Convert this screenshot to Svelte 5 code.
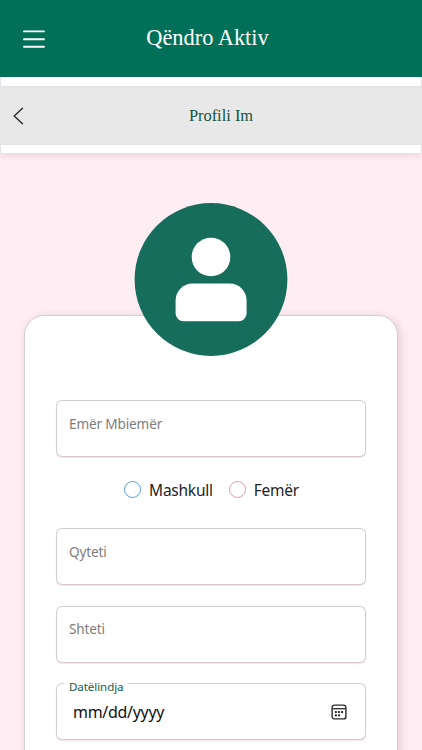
<script lang="ts">
  let name = $state('');
  let gender = $state('');
  let city = $state('');
  let country = $state('');
  let birthday = $state('');

  const genders = [
    { value: 'male', label: 'Mashkull' },
    { value: 'female', label: 'Femër' },
  ];
</script>

<div class="page">
  <header class="topbar">
    <button class="menu" aria-label="Menu">
      <svg width="22" height="20" viewBox="0 0 22 20" aria-hidden="true">
        <path d="M1 2.4H21M1 10.2H21M1 17.8H21" stroke="#fff" stroke-width="1.9" stroke-linecap="round" />
      </svg>
    </button>
    <h1>Qëndro Aktiv</h1>
  </header>

  <div class="subbar-wrap">
    <nav class="subbar">
      <button class="back" aria-label="Back">
        <svg width="12" height="18" viewBox="0 0 12 18" fill="none" aria-hidden="true">
          <path d="M9.5 1.3L1.2 9L9.5 16.7" stroke="#26292c" stroke-width="1.4" stroke-linecap="round" stroke-linejoin="round" />
        </svg>
      </button>
      <h2>Profili Im</h2>
    </nav>
  </div>

  <main>
    <div class="card">
      <svg class="avatar" width="154" height="154" viewBox="0 0 154 154" aria-hidden="true">
        <circle cx="77" cy="77.5" r="76.4" fill="#176d5c" />
        <circle cx="77" cy="55" r="19.3" fill="#fff" />
        <path
          d="M58.6 81.5H95.6A17 17 0 0 1 112.6 98.5V111.3A8 8 0 0 1 104.6 119.3H49.6A8 8 0 0 1 41.6 111.3V98.5A17 17 0 0 1 58.6 81.5Z"
          fill="#fff"
        />
      </svg>

      <form>
        <input class="field" placeholder="Emër Mbiemër" aria-label="Emër Mbiemër" bind:value={name} />

        <div class="genders">
          {#each genders as g}
            <label class={g.value}>
              <input type="radio" name="gender" value={g.value} bind:group={gender} />
              <span>{g.label}</span>
            </label>
          {/each}
        </div>

        <input class="field" placeholder="Qyteti" aria-label="Qyteti" bind:value={city} />
        <input class="field" placeholder="Shteti" aria-label="Shteti" bind:value={country} />

        <div class="field date">
          <label for="birthday">Datëlindja</label>
          <input id="birthday" placeholder="mm/dd/yyyy" bind:value={birthday} />
          <svg width="16" height="16" viewBox="0 0 16 16" fill="none" aria-hidden="true">
            <rect x="1.1" y="1.1" width="13.8" height="13.8" rx="2.5" stroke="#2b2b2b" stroke-width="1.4" />
            <path d="M1.2 4.7H14.8" stroke="#2b2b2b" stroke-width="1.3" />
            <g fill="#111">
              <circle cx="4.9" cy="8.1" r="1.1" />
              <circle cx="8" cy="8.1" r="1.1" />
              <circle cx="11.1" cy="8.1" r="1.1" />
              <circle cx="4.9" cy="11.3" r="1.1" />
              <circle cx="8" cy="11.3" r="1.1" />
            </g>
          </svg>
        </div>
      </form>
    </div>
  </main>
</div>

<style>
  .page {
    height: 100vh;
    overflow: hidden;
    background: #feedf3;
    color: #212529;
    font-family: 'Segoe UI', 'Noto Sans', sans-serif;
  }

  button {
    display: flex;
    padding: 0;
    border: 0;
    background: none;
    cursor: pointer;
  }

  h1,
  h2 {
    margin: 0;
    font-family: 'Liberation Serif', serif;
    font-weight: 400;
    text-align: center;
  }

  .topbar {
    display: grid;
    grid-template-columns: 46px 1fr 46px;
    align-items: center;
    height: 77px;
    background: #007158;
  }

  .menu {
    margin-left: 22.5px;
    padding-top: 1px;
  }

  h1 {
    padding-right: 7px;
    color: #fff;
    font-size: 22.4px;
    line-height: 28px;
    margin-top: -1px;
  }

  .subbar-wrap {
    box-sizing: border-box;
    height: 77px;
    padding: 9px 0 8px;
    border: 1px solid #e4e3e8;
    border-top: 0;
    background: #fff;
    box-shadow: 0 2px 6px rgba(120, 60, 85, 0.12);
  }

  .subbar {
    box-sizing: border-box;
    display: grid;
    grid-template-columns: 40px 1fr 40px;
    align-items: center;
    height: 59px;
    margin: 0 -1px;
    border-top: 1px solid #e2e3e8;
    border-bottom: 1px solid #e2e3e8;
    background: #e8e8e8;
  }

  .back {
    margin-left: 13px;
  }

  h2 {
    padding-left: 20px;
    color: #11533f;
    font-size: 16.4px;
    line-height: 20px;
  }

  main {
    padding: 161px 24px 0;
  }

  .card {
    box-sizing: border-box;
    height: 520px;
    padding: 0 31px;
    border: 1px solid #d4cdd1;
    border-radius: 20px;
    background: #fff;
    box-shadow: 2px 2px 9px rgba(110, 70, 90, 0.2);
  }

  .avatar {
    display: block;
    margin: -114px auto 44px;
  }

  form {
    display: flex;
    flex-direction: column;
    gap: 20px;
  }

  .field {
    box-sizing: border-box;
    width: 100%;
    height: 57px;
    padding: 0 12px 11px;
    border: 1px solid #d2cdd0;
    border-bottom-color: #dbc7ce;
    border-radius: 6px;
    background: #fff;
    box-shadow: 0 1px 1px rgba(190, 120, 140, 0.2);
    font-family: inherit;
    font-size: 13.6px;
    letter-spacing: -0.15px;
    outline: none;
  }

  .field::placeholder {
    color: #7d7d7d;
    opacity: 1;
  }

  .genders {
    display: flex;
    justify-content: center;
    gap: 16px;
    height: 31px;
    margin: -3px 0 3px;
    padding-left: 1px;
  }

  .genders label {
    display: flex;
    align-items: center;
    gap: 8px;
    font-size: 15.5px;
    letter-spacing: -0.25px;
  }

  .genders input {
    appearance: none;
    width: 17px;
    height: 17px;
    margin: 0;
    border: 1px solid #5b9bd5;
    border-radius: 50%;
  }

  .genders .female input {
    border-color: #f48fb8;
  }

  .genders input:checked {
    box-shadow: inset 0 0 0 4px #fff;
    background: currentColor;
  }

  .genders + .field ~ .field {
    margin-top: 0.5px;
  }

  .date {
    position: relative;
    display: flex;
    align-items: center;
    justify-content: space-between;
    padding: 0 18px 0 16px;
  }

  .date label {
    position: absolute;
    top: -7px;
    left: 7px;
    padding: 0 5px;
    background: #fff;
    color: #14604a;
    font-size: 11.6px;
    line-height: 20px;
    letter-spacing: -0.1px;
  }

  .date input {
    width: 180px;
    padding: 0;
    border: 0;
    outline: none;
    font-family: inherit;
    font-size: 16px;
    letter-spacing: -0.3px;
  }

  .date svg {
    margin-top: 1px;
  }

  .date input::placeholder {
    color: #111;
    opacity: 1;
  }
</style>
